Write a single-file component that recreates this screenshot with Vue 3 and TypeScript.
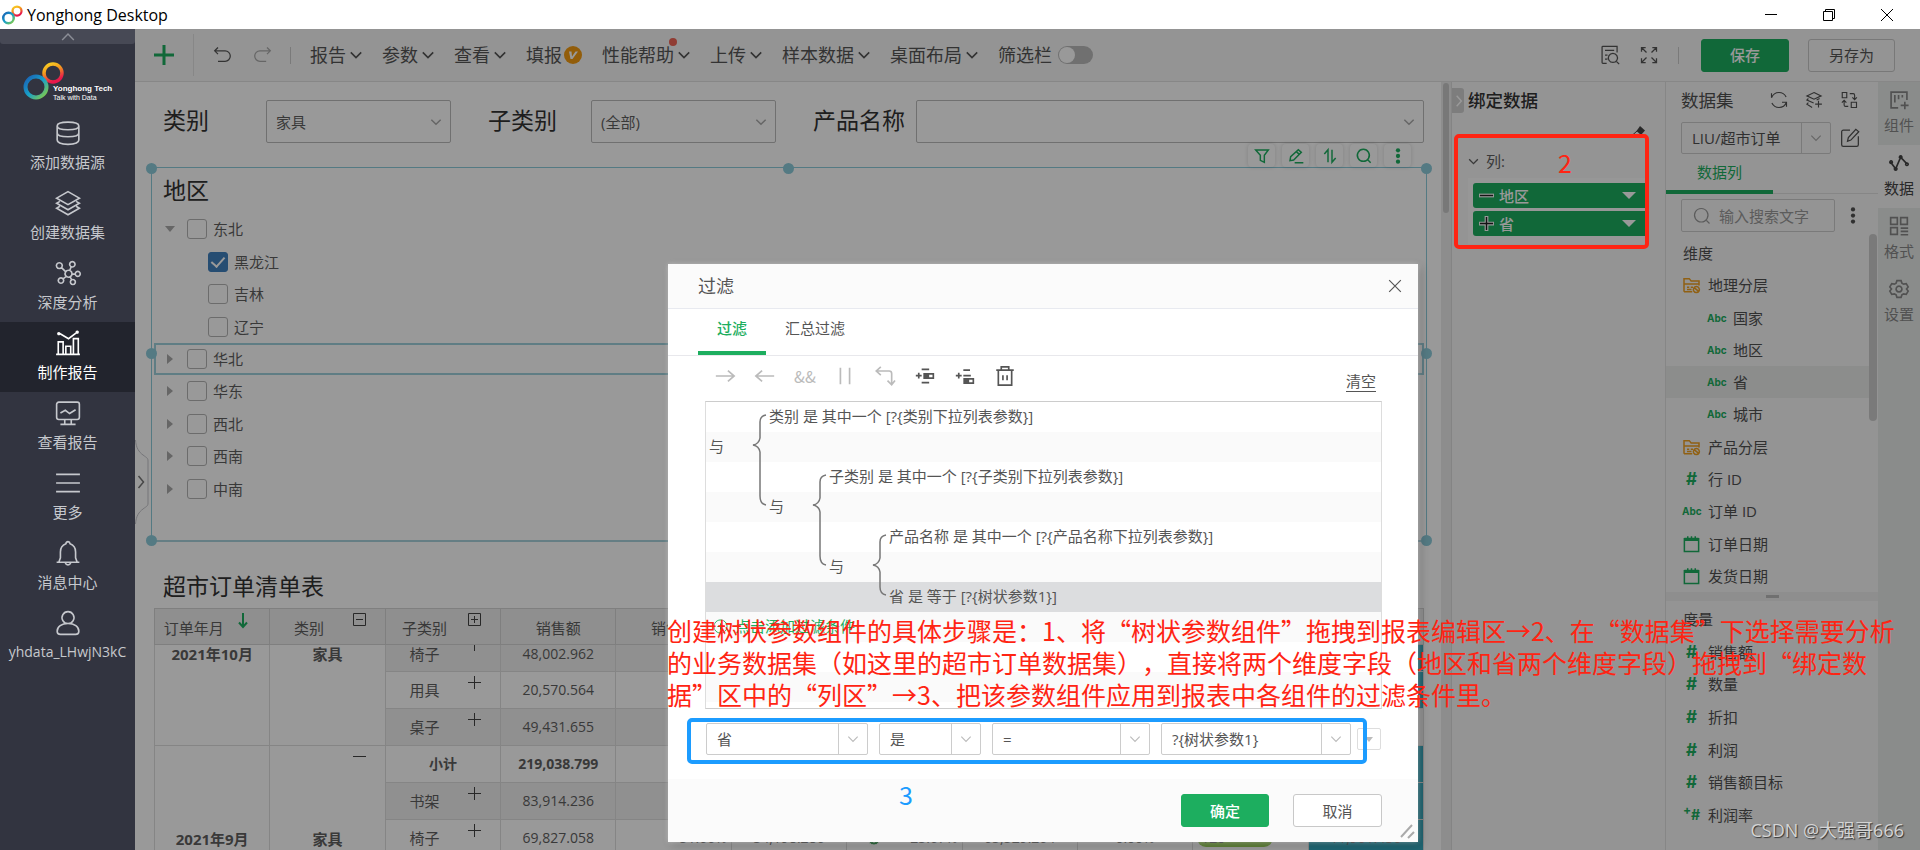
<script setup lang="ts">
import { ref } from 'vue'

interface NavItem { label: string; icon: string; active?: boolean }
interface MenuItem { label: string; arrow?: boolean; badge?: boolean; dot?: boolean }
interface TreeRow { id: string; label: string; child?: boolean; open?: boolean; checked?: boolean; hover?: boolean }
interface Field { label: string; kind: 'folder' | 'abc' | 'num' | 'date' | 'calc'; child?: boolean; active?: boolean }
interface Condition { id: string; label: string; value: string; size: string }

const icons: Record<string, string> = {
  db: 'M2 5.500C2 3 6.500 2 12 2s10 1 10 3.500S17.500 9 12 9 2 8 2 5.500zM2 5.500v13C2 21 6.500 22.500 12 22.500S22 21 22 18.500v-13M2 12c0 2.500 4.500 3.500 10 3.500S22 14.500 22 12',
  layers: 'M12 1.500l10.500 6L12 13.500 1.500 7.500zM4.500 10.500l-3 1.800L12 18.300l10.500-6-3-1.800M4.500 15l-3 1.800L12 22.800l10.500-6-3-1.800',
  graph: 'M12.500 9.500a3.200 3.200 0 1 0 .01 0M4 2.500a2.700 2.700 0 1 0 .01 0M16 1.500a2.500 2.500 0 1 0 .01 0M21 10.500a2.300 2.300 0 1 0 .01 0M5.500 16.500a2.500 2.500 0 1 0 .01 0M16.500 18a2.300 2.300 0 1 0 .01 0M6 7l4 4M15 6l-1.500 4M16 13h2.500M10.500 15l-3 2.500M14 15.500l1.500 3',
  chart: 'M1 22.500h22M3 22v-11h4.500v11M10 22v-7h4.500v7M17 22V8h4.500v14M4 3l8.500 5L20.500 2M3.500 2.500a.8 .8 0 1 0 .01 0M20.500 1.200a.8 .8 0 1 0 .01 0',
  monitor: 'M3.500 2h17a2 2 0 0 1 2 2v12a2 2 0 0 1-2 2h-17a2 2 0 0 1-2-2V4a2 2 0 0 1 2-2zM5 12l4.500-2.500 4 3L19 9M9 18v4M15 18v4M5 22.500h14',
  lines: 'M1 4h22M1 12h22M1 20h22',
  bell: 'M1.500 20.500h21M3.500 20.500l1.500-4V11c0-4 2.500-6.500 5-7.500 .3-1.500 1-2 2-2s1.700 .5 2 2c2.500 1 5 3.500 5 7.500v5.500l1.500 4M9.500 21c.5 1.500 1.300 2 2.500 2s2-.5 2.500-2',
  user: 'M12 1.500a5.500 5.500 0 1 0 .01 0M2 19.500c0-4 4-7 10-7s10 3 10 7c0 2-1 3-3 3H5c-2 0-3-1-3-3z',
  undo: 'M6 3L2 7l4 4M2 7h12.500a5.500 5.500 0 0 1 0 12.500H6',
  redo: 'M18 3l4 4-4 4M22 7H9.500a5.500 5.500 0 0 0 0 12.500H17',
  preview: 'M8 22H3.500a1 1 0 0 1-1-1V2.500a1 1 0 0 1 1-1h17V9M6 6.500h11M6 12h3M6 17h3M15.500 10a5.500 5.500 0 1 0 .01 0M19.500 19.500l3.500 3.500',
  expand: 'M3 8V3h5M3 3l6 6M16 3h5v5M21 3l-6 6M3 16v5h5M3 21l6-6M21 16v5h-5M21 21l-6-6',
  refresh: 'M2 9C4 4 7.500 2 12 2c4 0 7.500 2 9.500 6M2 3v6M22 15c-2 5-5.500 7-10 7-4 0-7.500-2-9.500-6M16 15h6v6',
  addset: 'M12 2l9.500 4.500L12 11 2.500 6.500zM4.500 10L2.500 12l9 4M4.500 15.500l-2 2 7 4.500M19.500 10l-4 2M18 13v9M13.500 17.500h9',
  swap: 'M3 2h6v7H3zM15 15h7v7h-7zM13 3.500h4.500a2 2 0 0 1 2 2V11M16.500 8.500l3 3 3-3M11 20.500H7.500a2 2 0 0 1-2-2V13M2.500 15.500l3-3 3 3',
  edit: 'M12 2.500H4A2 2 0 0 0 2 4.500V20a2 2 0 0 0 2 2h16a2 2 0 0 0 2-2V10M9 16l1-4.500 9-10 3.500 3L13 14.500z',
  search: 'M11 2a9 9 0 1 0 .01 0M18 18l4 4',
  widget: 'M11 21.500H2.500v-19h19V12M7 6v9M11.500 6v5M16 6v3M19 14v9M14 18.500h9.500',
  dataline: 'M2 11l6 8 6-14 7.500 8M2.500 9.500a1.500 1.500 0 1 0 .01 0M8 17.500a1.500 1.500 0 1 0 .01 0M14 3.500a1.500 1.500 0 1 0 .01 0M21.500 12a1.500 1.500 0 1 0 .01 0',
  format: 'M2 2h8v8H2zM14 2h8v8h-8zM2 14h8v8H2zM14 14.500h9M14 18.500h9M14 22.500h9',
  gear: 'M9.500 2h5l1 3 2 1.200 3.200-.7 2.300 4-2 2.500 2 2.500-2.300 4-3.200-.7-2 1.200-1 3h-5l-1-3-2-1.200-3.200 .7-2.300-4L3 12 1 9.500l2.300-4 3.200 .7 2-1.200zM12 8.500a3.500 3.500 0 1 0 .01 0',
  funnel: 'M2.500 3h19l-6 8v10.500l-6-3V11z',
  pencil: 'M3 19l1-6L15.500 2.500l4.500 4L8.500 18zM12.500 5.500l4.500 4M10 22h13',
  sort: 'M3.500 9l5.500-6.500v19M15 2.500v19l5.500-6.500',
  right: 'M1 12h22M15.500 5.500L23 12l-7.500 6.500',
  left: 'M23 12H1M8.500 5.500L1 12l7.500 6.500',
  bars: 'M6.500 2v20M17.500 2v20',
  turn: 'M7 1L1.500 6 7 11M1.500 6H17a3 3 0 0 1 3 3v13M15 17.500l5 5 4-5',
  trash: 'M1.500 5h21M7.500 4.500V1h9v3.500M4 5v18h16V5M9.500 11v6M14.500 11v6',
  chevDown: 'M4 8l8 8 8-8',
  chevUp: 'M2 17l10-10 10 10',
  chevRight: 'M8 3l8 9-8 9',
  close: 'M2 2l20 20M22 2L2 22',
  folder: 'M2 21V3.500h7l2.500 3H22v6M2 21h11M2 10.500h20M6 15h3M11 15h3M6 18h6M18.500 14a4 4 0 1 0 .01 0M15.500 15.500l6 5',
  calendar: 'M2.500 5h19v17h-19zM2.500 4.500h19M2.500 7h19M7 1.500V6M17 1.500V6M12 1.500V6',
}

const nav: NavItem[] = [
  { label: '添加数据源', icon: 'db' },
  { label: '创建数据集', icon: 'layers' },
  { label: '深度分析', icon: 'graph' },
  { label: '制作报告', icon: 'chart', active: true },
  { label: '查看报告', icon: 'monitor' },
  { label: '更多', icon: 'lines' },
  { label: '消息中心', icon: 'bell' },
  { label: 'yhdata_LHwjN3kC', icon: 'user' },
]

const menus: MenuItem[] = [
  { label: '报告', arrow: true },
  { label: '参数', arrow: true },
  { label: '查看', arrow: true },
  { label: '填报', badge: true },
  { label: '性能帮助', arrow: true, dot: true },
  { label: '上传', arrow: true },
  { label: '样本数据', arrow: true },
  { label: '桌面布局', arrow: true },
]

const params = [
  { id: 'p1', label: '类别', value: '家具' },
  { id: 'p2', label: '子类别', value: '(全部)' },
  { id: 'p3', label: '产品名称', value: '' },
]

const regions = ref<TreeRow[]>([
  { id: 'r1', label: '东北', open: true },
  { id: 'r2', label: '黑龙江', child: true, checked: true },
  { id: 'r3', label: '吉林', child: true },
  { id: 'r4', label: '辽宁', child: true },
  { id: 'r5', label: '华北', hover: true },
  { id: 'r6', label: '华东' },
  { id: 'r7', label: '西北' },
  { id: 'r8', label: '西南' },
  { id: 'r9', label: '中南' },
])

const handles = ['tl', 'tc', 'tr', 'ml', 'mr', 'bl', 'bc', 'br']
const tools = ['funnel', 'pencil', 'sort', 'search', 'more']

const dimensions: Field[] = [
  { label: '地理分层', kind: 'folder' },
  { label: '国家', kind: 'abc', child: true },
  { label: '地区', kind: 'abc', child: true },
  { label: '省', kind: 'abc', child: true, active: true },
  { label: '城市', kind: 'abc', child: true },
  { label: '产品分层', kind: 'folder' },
  { label: '行 ID', kind: 'num' },
  { label: '订单 ID', kind: 'abc' },
  { label: '订单日期', kind: 'date' },
  { label: '发货日期', kind: 'date' },
]

const measures: Field[] = [
  { label: '销售额', kind: 'num' },
  { label: '数量', kind: 'num' },
  { label: '折扣', kind: 'num' },
  { label: '利润', kind: 'num' },
  { label: '销售额目标', kind: 'num' },
  { label: '利润率', kind: 'calc' },
]

const rail: NavItem[] = [
  { label: '组件', icon: 'widget' },
  { label: '数据', icon: 'dataline', active: true },
  { label: '格式', icon: 'format' },
  { label: '设置', icon: 'gear' },
]

const rules = [
  { text: '类别 是 其中一个 [?{类别下拉列表参数}]', level: 1 },
  { text: '与', level: 0 },
  { text: '子类别 是 其中一个 [?{子类别下拉列表参数}]', level: 2 },
  { text: '与', level: 1 },
  { text: '产品名称 是 其中一个 [?{产品名称下拉列表参数}]', level: 3 },
  { text: '与', level: 2 },
  { text: '省 是 等于 [?{树状参数1}]', level: 3, selected: true },
]

const conditions: Condition[] = [
  { id: 'c1', label: '字段', value: '省', size: 'w-field' },
  { id: 'c2', label: '是否', value: '是', size: 'w-is' },
  { id: 'c3', label: '运算符', value: '=', size: 'w-op' },
  { id: 'c4', label: '参数', value: '?{树状参数1}', size: 'w-val' },
]
</script>

<template>
  <div class="desktop">
    <header class="titlebar">
      <svg class="mark" viewBox="0 0 42 40">
        <circle cx="30" cy="12" r="9" fill="none" stroke="url(#warm)" stroke-width="4.500" />
        <circle cx="13" cy="26" r="10.500" fill="none" stroke="url(#cool)" stroke-width="5" />
      </svg>
      <span class="app-name">Yonghong Desktop</span>
      <div class="win-buttons">
        <button type="button" aria-label="最小化"><svg viewBox="0 0 12 12"><path d="M0 5.500h12" /></svg></button>
        <button type="button" aria-label="还原"><svg viewBox="0 0 12 12"><path d="M.5 2.500h9v9h-9zM2.500 2.500v-2h9v9h-2" /></svg></button>
        <button type="button" aria-label="关闭窗口"><svg viewBox="0 0 12 12"><path d="M0 0l12 12M12 0L0 12" /></svg></button>
      </div>
    </header>

    <div class="shell">
      <nav class="sidebar">
        <button type="button" class="fold" aria-label="收起">
          <svg class="ico" viewBox="0 0 24 24"><path :d="icons.chevUp" /></svg>
        </button>
        <div class="logo">
          <svg viewBox="0 0 42 40">
            <defs>
              <linearGradient id="warm" x1="0" y1="0" x2=".4" y2="1">
                <stop offset="0" stop-color="#f9d423" /><stop offset=".45" stop-color="#f39a1e" /><stop offset="1" stop-color="#e8174b" />
              </linearGradient>
              <linearGradient id="cool" x1="0" y1="0" x2="1" y2="1">
                <stop offset="0" stop-color="#1a5fb4" /><stop offset=".5" stop-color="#18a0c8" /><stop offset="1" stop-color="#8ccf3f" />
              </linearGradient>
            </defs>
            <circle cx="30" cy="12" r="9" fill="none" stroke="url(#warm)" stroke-width="3.500" />
            <circle cx="13" cy="26" r="10.500" fill="none" stroke="url(#cool)" stroke-width="4" />
          </svg>
          <div class="logo-text"><strong>Yonghong Tech</strong><small>Talk with Data</small></div>
        </div>
        <a v-for="n in nav" :key="n.label" href="#" class="nav-item" :class="{ active: n.active }">
          <svg class="ico" viewBox="0 0 24 24"><path :d="icons[n.icon]" /></svg>
          <span>{{ n.label }}</span>
        </a>
      </nav>

      <div class="work">
        <div class="toolbar">
          <button type="button" class="add" aria-label="新建"><svg viewBox="0 0 20 20"><path d="M10 0v20M0 10h20" /></svg></button>
          <button type="button" class="tool undo" aria-label="撤销"><svg class="ico" viewBox="0 0 24 24"><path :d="icons.undo" /></svg></button>
          <button type="button" class="tool redo" aria-label="重做"><svg class="ico" viewBox="0 0 24 24"><path :d="icons.redo" /></svg></button>
          <i class="sep"></i>
          <div class="menus">
            <button v-for="m in menus" :key="m.label" type="button" class="menu">
              {{ m.label }}
              <svg v-if="m.arrow" class="ico caret" viewBox="0 0 24 24"><path :d="icons.chevDown" /></svg>
              <svg v-if="m.badge" class="vip" viewBox="0 0 18 18"><circle cx="9" cy="9" r="9" /><path d="M5 5.500h2.500l.5 5 3.500-5H14L8.500 13H6.500z" /></svg>
              <i v-if="m.dot" class="dot"></i>
            </button>
            <label class="switch">筛选栏<input type="checkbox" role="switch" /></label>
          </div>
          <button type="button" class="tool" aria-label="预览"><svg class="ico" viewBox="0 0 24 24"><path :d="icons.preview" /></svg></button>
          <button type="button" class="tool full" aria-label="全屏"><svg class="ico" viewBox="0 0 24 24"><path :d="icons.expand" /></svg></button>
          <i class="sep end"></i>
          <button type="button" class="btn primary">保存</button>
          <button type="button" class="btn saveas">另存为</button>
        </div>

        <div class="body">
          <main class="canvas">
            <div class="params">
              <template v-for="p in params" :key="p.id">
                <label :for="p.id">{{ p.label }}</label>
                <div class="param-box" :class="{ wide: p.id === 'p3' }">
                  <select :id="p.id"><option>{{ p.value }}</option></select>
                  <svg class="ico" viewBox="0 0 24 24"><path :d="icons.chevDown" /></svg>
                </div>
              </template>
            </div>

            <section class="region">
              <i v-for="h in handles" :key="h" class="handle" :class="h"></i>
              <div class="region-tools">
                <button v-for="t in tools" :key="t" type="button" :aria-label="t">
                  <svg v-if="t === 'more'" class="dots" viewBox="0 0 24 24"><circle cx="12" cy="3.500" r="3.200" /><circle cx="12" cy="12" r="3.200" /><circle cx="12" cy="20.500" r="3.200" /></svg>
                  <svg v-else class="ico" viewBox="0 0 24 24"><path :d="icons[t]" /></svg>
                </button>
              </div>
              <h2>地区</h2>
              <div class="region-tree">
                <div v-for="r in regions" :key="r.id" class="tree-row" :class="{ child: r.child, hover: r.hover }">
                  <i v-if="!r.child" class="arrow" :class="{ open: r.open }"></i>
                  <input :id="r.id" v-model="r.checked" type="checkbox" />
                  <label :for="r.id">{{ r.label }}</label>
                </div>
              </div>
            </section>

            <section class="orders">
              <h2>超市订单清单表</h2>
              <table>
                <thead>
                  <tr>
                    <th class="mark-cell">订单年月<svg class="mini down" viewBox="0 0 12 16"><path d="M6 0v14M2 9.500L6 14l4-4.500" /></svg></th>
                    <th class="mark-cell">类别<svg class="mini" viewBox="0 0 13 13"><path d="M.5 .5h12v12H.5zM3 6.500h7" /></svg></th>
                    <th class="mark-cell">子类别<svg class="mini" viewBox="0 0 13 13"><path d="M.5 .5h12v12H.5zM3 6.500h7M6.500 3v7" /></svg></th>
                    <th>销售额</th>
                    <th>销售额</th>
                    <th></th><th></th><th></th><th></th><th></th><th></th>
                  </tr>
                </thead>
                <tbody>
                  <tr class="cut shade">
                    <td rowspan="3" class="group top">2021年10月</td>
                    <td rowspan="3" class="group top">家具</td>
                    <td class="mark-cell">椅子<svg class="mini plus" viewBox="0 0 13 13"><path d="M6.500 7v6" /></svg></td>
                    <td>48,002.962</td><td></td><td></td><td></td><td></td><td></td><td></td><td class="teal"></td>
                  </tr>
                  <tr>
                    <td class="mark-cell">用具<svg class="mini plus" viewBox="0 0 13 13"><path d="M6.500 0v13M0 6.500h13" /></svg></td>
                    <td>20,570.564</td><td></td><td></td><td></td><td></td><td></td><td></td><td class="teal"></td>
                  </tr>
                  <tr class="shade">
                    <td class="mark-cell">桌子<svg class="mini plus" viewBox="0 0 13 13"><path d="M6.500 0v13M0 6.500h13" /></svg></td>
                    <td>49,431.655</td><td></td><td></td><td></td><td></td><td></td><td></td><td></td>
                  </tr>
                  <tr class="total">
                    <td rowspan="3" class="group bottom">2021年9月</td>
                    <td rowspan="3" class="group bottom">家具<svg class="mini plus" viewBox="0 0 13 13"><path d="M0 6.500h13" /></svg></td>
                    <td>小计</td><td>219,038.799</td><td class="right">100.00%</td><td></td><td></td><td></td><td></td><td></td><td class="teal"></td>
                  </tr>
                  <tr class="shade">
                    <td class="mark-cell">书架<svg class="mini plus" viewBox="0 0 13 13"><path d="M6.500 0v13M0 6.500h13" /></svg></td>
                    <td>83,914.236</td><td></td><td></td><td></td><td></td><td></td><td></td><td class="teal"></td>
                  </tr>
                  <tr>
                    <td class="mark-cell">椅子<svg class="mini plus" viewBox="0 0 13 13"><path d="M6.500 0v13M0 6.500h13" /></svg></td>
                    <td>69,827.058</td><td class="right">51.66%</td><td>54,198.286</td>
                    <td class="right"><svg class="drop" viewBox="0 0 12 12"><circle cx="6" cy="6" r="6" /><path d="M6 2v7M3 6.500l3 3 3-3" /></svg>-25.67%</td>
                    <td>65,529.264</td><td>0.00%</td><td class="pill-cell"><span>120</span></td><td class="teal">11,961.456</td>
                  </tr>
                </tbody>
              </table>
            </section>
            <svg class="side-tab" viewBox="0 0 14 84">
              <path class="edge" d="M.5 0C1 8 4 12 8 15s5 3 5 6v42c0 3-1 3-5 6S1 76 .5 84" />
              <path d="M3.500 36l5 6-5 6" />
            </svg>
          </main>
          <div class="scroll"><i></i></div>

          <aside class="binding">
            <button type="button" class="collapse" aria-label="收起面板"><svg class="ico" viewBox="0 0 24 24"><path :d="icons.chevRight" /></svg></button>
            <h3>绑定数据</h3>
            <div class="erase"><svg viewBox="0 0 14 11"><path d="M8 0l5 4.500L9 9 4.500 5z" /><path d="M5 5L0 9.500" class="line" /></svg></div>
            <div class="col-head"><svg class="ico" viewBox="0 0 24 24"><path :d="icons.chevDown" /></svg>列:</div>
            <div class="pills">
              <button type="button"><svg class="sign" viewBox="0 0 16 16"><path class="halo" d="M0 8h16" /><path d="M1 8h14" /></svg>地区<i></i></button>
              <button type="button"><svg class="sign" viewBox="0 0 16 16"><path class="halo" d="M0 8h16M8 0v16" /><path d="M1 8h14M8 1v14" /></svg>省<i></i></button>
            </div>
          </aside>

          <aside class="dataset">
            <div class="ds-head">
              <h3>数据集</h3>
              <button v-for="i in ['refresh', 'addset', 'swap']" :key="i" type="button" :aria-label="i"><svg class="ico" viewBox="0 0 24 24"><path :d="icons[i]" /></svg></button>
            </div>
            <div class="ds-pick">
              <div class="combo">
                <select aria-label="数据集"><option>LIU/超市订单</option></select>
                <span><svg class="ico" viewBox="0 0 24 24"><path :d="icons.chevDown" /></svg></span>
              </div>
              <button type="button" aria-label="编辑"><svg class="ico" viewBox="0 0 24 24"><path :d="icons.edit" /></svg></button>
            </div>
            <div class="ds-tabs"><button type="button">数据列</button></div>
            <div class="ds-search">
              <div class="search-box">
                <svg class="ico" viewBox="0 0 24 24"><path :d="icons.search" /></svg>
                <input type="text" placeholder="输入搜索文字" aria-label="搜索" />
              </div>
              <button type="button" aria-label="更多"><svg class="dots" viewBox="0 0 24 24"><circle cx="12" cy="3.500" r="3" /><circle cx="12" cy="12" r="3" /><circle cx="12" cy="20.500" r="3" /></svg></button>
            </div>
            <div class="fields dims">
              <div class="caption">维度</div>
              <div v-for="f in dimensions" :key="f.label" class="field-row" :class="{ child: f.child, active: f.active }">
                <svg v-if="f.kind === 'folder'" class="ico folder" viewBox="0 0 24 24"><path :d="icons.folder" /></svg>
                <svg v-else-if="f.kind === 'date'" class="ico date" viewBox="0 0 24 24"><path :d="icons.calendar" /></svg>
                <b v-else-if="f.kind === 'abc'" class="abc">Abc</b>
                <b v-else class="num">#</b>
                <span>{{ f.label }}</span>
              </div>
              <i class="thumb"></i>
            </div>
            <div class="splitter"><i></i></div>
            <div class="fields meas">
              <div class="caption">度量</div>
              <div v-for="f in measures" :key="f.label" class="field-row">
                <b class="num" :class="{ calc: f.kind === 'calc' }"><sup v-if="f.kind === 'calc'">+</sup>#</b>
                <span>{{ f.label }}</span>
              </div>
            </div>
          </aside>

          <nav class="rail">
            <button v-for="r in rail" :key="r.label" type="button" :class="{ active: r.active }">
              <svg class="ico" viewBox="0 0 24 24"><path :d="icons[r.icon]" /></svg>{{ r.label }}
            </button>
          </nav>
        </div>

        <div class="mask"></div>

        <div class="dialog" role="dialog" aria-label="过滤">
          <div class="dlg-head">
            <h3>过滤</h3>
            <button type="button" aria-label="关闭"><svg class="ico" viewBox="0 0 24 24"><path :d="icons.close" /></svg></button>
          </div>
          <div class="dlg-tabs">
            <button type="button" class="active">过滤</button>
            <button type="button">汇总过滤</button>
          </div>
          <div class="dlg-tools">
            <button type="button" aria-label="右移"><svg class="ico" viewBox="0 0 24 24"><path :d="icons.right" /></svg></button>
            <button type="button" aria-label="左移"><svg class="ico" viewBox="0 0 24 24"><path :d="icons.left" /></svg></button>
            <button type="button" class="and">&amp;&amp;</button>
            <button type="button" aria-label="或"><svg class="ico" viewBox="0 0 24 24"><path :d="icons.bars" /></svg></button>
            <button type="button" aria-label="非"><svg class="ico" viewBox="0 0 24 24"><path :d="icons.turn" /></svg></button>
            <button type="button" class="on" aria-label="前插条件"><svg class="ico" viewBox="0 0 24 24"><path d="M1 11.500h7M4.500 8v7M8 4h9M8 20h9" /><path class="fill" d="M11 9.500h11v5H11z" /><path class="hole" d="M17 10.500h4v3h-4z" /></svg></button>
            <button type="button" class="on" aria-label="后插条件"><svg class="ico" viewBox="0 0 24 24"><path d="M1 11.500h7M4.500 8v7M10 5h8M10 11.500h9" /><path class="fill" d="M11 15.500h11v5H11z" /><path class="hole" d="M17 16.500h4v3h-4z" /></svg></button>
            <button type="button" class="on" aria-label="删除"><svg class="ico" viewBox="0 0 24 24"><path :d="icons.trash" /></svg></button>
            <a href="#" class="clear">清空</a>
          </div>
          <div class="rules">
            <div v-for="(r, i) in rules" :key="i" class="rule" :class="['lv' + r.level, { selected: r.selected }]">{{ r.text }}</div>
            <div class="rule hint">
              <svg class="ico" viewBox="0 0 24 24"><path d="M12 1.500a10.500 10.500 0 1 0 .01 0M12 7v10M7 12h10" /></svg>点击添加过滤条件
            </div>
            <div class="rule"></div>
            <div class="rule"></div>
            <svg class="braces" viewBox="0 0 136 184">
              <path d="M14 1Q8 2 8 8V24Q7 30 1 31Q7 32 8 38V82Q8 90 14 91" />
              <path d="M74 61Q68 62 68 68V84Q67 90 61 91Q67 92 68 98V142Q68 150 74 151" />
              <path d="M134 121Q128 122 128 128V144Q127 150 121 151Q127 152 128 158V173Q128 180 134 181" />
            </svg>
          </div>
          <div class="conds">
            <div v-for="c in conditions" :key="c.id" class="combo" :class="c.size">
              <select :id="c.id" :aria-label="c.label"><option>{{ c.value }}</option></select>
              <span><svg class="ico" viewBox="0 0 24 24"><path :d="icons.chevDown" /></svg></span>
            </div>
            <button type="button" class="drop-btn" aria-label="更多条件"><i></i></button>
          </div>
          <div class="dlg-foot">
            <button type="button" class="btn primary">确定</button>
            <button type="button" class="btn">取消</button>
            <svg class="grip" viewBox="0 0 15 15"><path d="M1 13L12 1M8 14l6-6" /></svg>
          </div>
        </div>
      </div>
    </div>

    <div class="box red"></div>
    <span class="step red-text">2</span>
    <div class="box blue"></div>
    <span class="step blue-text">3</span>
    <p class="note">创建树状参数组件的具体步骤是：1、将“树状参数组件”拖拽到报表编辑区→2、在“数据集”下选择需要分析<br />的业务数据集（如这里的超市订单数据集），直接将两个维度字段（地区和省两个维度字段）拖拽到“绑定数<br />据”区中的“列区”→3、把该参数组件应用到报表中各组件的过滤条件里。</p>
    <span class="watermark">CSDN @大强哥666</span>
  </div>
</template>

<style>
body { margin: 0; }
</style>

<style scoped>
.desktop, .desktop * { box-sizing: border-box; }
.desktop {
  position: relative; display: flex; flex-direction: column; height: 100vh; overflow: hidden;
  background: #fff; color: #606060; font: 15px/20px "Open Sans", "Noto Sans CJK SC", sans-serif;
}
button, input, select { margin: 0; padding: 0; border: 0; background: none; color: inherit; font: inherit; }
select { appearance: none; outline: none; min-width: 0; }
a { color: inherit; text-decoration: none; }
h2, h3, p { margin: 0; font-weight: 400; }
svg { display: block; flex: none; overflow: visible; }
.ico { width: 20px; height: 20px; fill: none; stroke: currentColor; stroke-width: 1.500; }

.titlebar { display: flex; align-items: center; height: 29px; flex: none; padding-left: 2px; background: #fff; color: #000; }
.mark { width: 21px; height: 20px; }
.app-name { flex: 1; margin-left: 4px; font-size: 16px; }
.win-buttons { display: flex; padding-right: 4px; }
.win-buttons button { display: grid; place-items: center; width: 58px; height: 28px; }
.win-buttons svg { width: 12px; height: 12px; fill: none; stroke: #000; stroke-width: 1; }

.shell { display: flex; flex: 1; min-height: 0; }
.sidebar { width: 135px; flex: none; background: #323440; color: #c6c8cd; }
.fold { display: grid; place-items: center; width: 100%; height: 15px; background: #474955; color: #8b8d96; border-radius: 0 0 3px 3px; }
.fold .ico { width: 16px; height: 14px; stroke-width: 2.500; }
.logo { display: flex; height: 68px; padding: 17px 0 0 23px; }
.logo > svg { width: 42px; height: 40px; }
.logo-text { display: flex; flex-direction: column; margin: 22px 0 0 -12px; color: #fff; font-family: "Liberation Sans", sans-serif; white-space: nowrap; z-index: 1; }
.logo-text strong { font-size: 8px; line-height: 11px; }
.logo-text small { font-size: 7px; line-height: 8px; }
.nav-item { display: flex; flex-direction: column; align-items: center; height: 70px; padding-top: 8px; white-space: nowrap; }
.nav-item .ico { width: 26px; height: 26px; }
.nav-item span { margin-top: 6px; }
.nav-item:last-child { font-size: 14px; }
.nav-item.active { background: #22242d; color: #fff; }

.work { position: relative; display: flex; flex-direction: column; flex: 1; min-width: 0; }
.mask { position: absolute; inset: 0; background: rgba(0, 0, 0, .4); }
.toolbar { display: flex; align-items: center; flex: none; height: 53px; padding-right: 25px; background: #f7f7f7; border-bottom: 1px solid #e2e2e2; color: #555; }
.add { display: grid; place-items: center; width: 59px; height: 42px; border-right: 1px solid #e2e2e2; }
.add svg { width: 20px; height: 20px; stroke: #1dae5f; stroke-width: 3; }
.tool { display: grid; place-items: center; width: 22px; height: 30px; }
.tool.undo { margin-left: 18px; }
.tool.redo { margin-left: 17px; color: #aaa; }
.tool.full { margin: 0 18px 0 17px; }
.sep { width: 1px; height: 17px; margin: 0 19px 0 17px; background: #ccc; }
.sep.end { margin: 0 22px 0 0; }
.menus { display: flex; flex: 1; gap: 20px; font-size: 18px; }
.menu { position: relative; display: flex; align-items: center; gap: 4px; height: 30px; white-space: nowrap; }
.caret { width: 12px; height: 14px; stroke-width: 2.500; }
.caret path { transform: scale(1.3); transform-origin: center; }
.vip { width: 18px; height: 18px; margin-left: -2px; fill: #f39c12; }
.vip path { fill: #fff; }
.dot { position: absolute; top: -2px; right: 13px; width: 8px; height: 8px; border-radius: 50%; background: #f06455; }
.switch { display: flex; align-items: center; gap: 6px; white-space: nowrap; }
.switch input { appearance: none; display: flex; align-items: center; width: 35px; height: 18px; border-radius: 9px; padding: 1px; background: #bbb; }
.switch input::before { content: ""; width: 16px; height: 16px; border-radius: 50%; background: #fff; }
.btn { width: 89px; height: 33px; border: 1px solid #c8c8c8; border-radius: 3px; background: #fff; color: #555; }
.btn.primary { width: 88px; border-color: #1dae5f; background: #1dae5f; color: #fff; font-weight: 500; }
.saveas { width: 87px; margin-left: 19px; background: #f7f7f7; }

.body { display: flex; flex: 1; min-height: 0; }
.canvas { position: relative; flex: 1; min-width: 0; overflow: hidden; }
.canvas h2 { color: #333; font-size: 23px; }
.params { display: flex; align-items: center; padding: 18px 17px 0 28px; }
.params label { width: 103px; flex: none; color: #333; font-size: 23px; line-height: 30px; padding-bottom: 3px; white-space: nowrap; }
.param-box { display: grid; align-items: center; width: 185px; height: 43px; margin-right: 37px; border: 1px solid #bbb; border-radius: 2px; }
.param-box > * { grid-area: 1 / 1; }
.param-box select { width: 100%; height: 100%; padding-left: 9px; }
.param-box .ico { justify-self: end; width: 14px; height: 14px; margin-right: 7px; color: #aaa; stroke-width: 2.500; pointer-events: none; }
.param-box.wide { flex: 1; margin-right: 0; }

.region { position: relative; height: 375px; margin: 24px 14px 0 16px; border: 1px solid #8ccbdb; border-bottom: 2px solid #a9d3dd; }
.region h2 { height: 45px; padding: 2px 0 0 11px; line-height: 41px; }
.handle { position: absolute; width: 11px; height: 11px; border-radius: 50%; background: #8ccbdb; }
.tl, .tc, .tr { top: -5px; }
.ml, .mr { top: 180px; }
.bl, .bc, .br { bottom: -6px; }
.tl, .ml, .bl { left: -6px; }
.tr, .mr, .br { right: -6px; }
.tc, .bc { left: calc(50% - 6px); }
.region-tools { position: absolute; right: 15px; top: -24px; display: flex; gap: 7px; color: #1dae5f; }
.region-tools button { display: grid; place-items: center; width: 27px; height: 23px; border-radius: 4px; background: #fff; box-shadow: 0 0 4px rgba(0, 0, 0, .15); }
.region-tools svg { width: 16px; height: 16px; stroke-width: 2.200; }
.dots { fill: currentColor; }
.region-tree { display: flex; flex-direction: column; height: 292px; margin: 0 2px; }
.tree-row { display: flex; align-items: center; flex: 1; padding-left: 9px; border: 2px solid transparent; }
.tree-row.child { padding-left: 52px; }
.tree-row.hover { border-color: #9fd0dc; }
.arrow { width: 22px; }
.arrow::before { content: ""; display: block; width: 0; border: 5px solid transparent; border-left: 6px solid #aaa; border-right: 0; margin-left: 2px; }
.arrow.open::before { border: 5px solid transparent; border-top: 6px solid #aaa; border-bottom: 0; margin-left: 0; }
.tree-row input { appearance: none; display: grid; place-items: center; width: 20px; height: 20px; margin-right: 6px; border: 1px solid #b4b4b4; border-radius: 3px; }
.tree-row input:checked { background: #4080bf; border-color: #4080bf; }
.tree-row input:checked::before { content: ""; width: 6px; height: 11px; margin-top: -3px; border: solid #fff; border-width: 0 2px 2px 0; transform: rotate(42deg); }

.orders h2 { padding: 25px 0 3px 28px; line-height: 38px; }
.orders table { table-layout: fixed; width: calc(100% - 36px); margin-left: 19px; border-collapse: collapse; text-align: center; }
.orders th { position: relative; height: 36px; padding: 2px 0 0; border: 1px solid #d4d4d4; background: #eee; font-weight: 400; white-space: nowrap; }
.orders td { position: relative; height: 37px; padding: 0; border: 1px solid #dedede; font-size: 14px; line-height: 18px; }
.orders .cut td { height: 27px; vertical-align: top; }
.orders .shade td:not(.group) { background: #f1f1f1; }
.orders .group { font-size: 15px; font-weight: 700; }
.orders .bottom { vertical-align: bottom; padding-bottom: 8px; }
.orders .mark-cell { padding-right: 37px; font-size: 15px; }
.orders .total td { font-weight: 700; }
.orders .right { padding-right: 4px; text-align: right; }
.orders .teal, .orders .shade td.teal { background: #35a9bf; }
.mini { position: absolute; top: 4px; right: 19px; width: 13px; height: 13px; fill: none; stroke: #444; stroke-width: 1; }
.mini.down { right: 20px; width: 12px; height: 16px; stroke: #1dae5f; stroke-width: 2; }
.cut .mini { top: -7px; }
.drop { display: inline-block; width: 12px; height: 12px; margin-right: 26px; fill: #1f8b3b; stroke: #fff; vertical-align: middle; }
.pill-cell span { display: block; width: 76px; margin-left: 4px; padding-left: 4px; border-radius: 9px; background: #9bd35a; text-align: left; }
.side-tab { position: absolute; left: 0; top: 358px; width: 14px; height: 84px; fill: none; stroke: #777; stroke-width: 1.500; }
.side-tab .edge { stroke: #c4c4ca; stroke-width: 1; }

.scroll { width: 11px; flex: none; padding: 1px 2px 0; background: #ececec; border-right: 1px solid #ddd; }
.scroll i { display: block; height: 130px; border-radius: 4px; background: #c9c9c9; }

.binding { width: 214px; flex: none; background: #f7f7f7; border-right: 1px solid #e0e0e0; overflow: hidden; }
.binding h3 { margin: -23px 0 0 16px; color: #333; font-weight: 500; }
.collapse { display: grid; place-items: center; width: 12px; height: 25px; margin-top: 6px; border-radius: 0 3px 3px 0; background: #d0d0d0; color: #fff; }
.collapse .ico { width: 14px; height: 16px; stroke-width: 2.500; }
.erase { display: flex; justify-content: flex-end; margin: 16px 19px 0 0; }
.erase svg { width: 14px; height: 11px; fill: #444; }
.erase .line { stroke: #444; }
.col-head { display: flex; align-items: center; gap: 6px; margin: 13px 0 6px 15px; height: 22px; }
.col-head .ico { width: 13px; height: 13px; stroke-width: 2.500; }
.pills { display: flex; flex-direction: column; gap: 3px; margin: 0 20px 0 16px; padding: 5px 0 8px 5px; background: #fcfcfc; }
.pills button { display: flex; align-items: center; height: 25px; padding: 0 9px 0 6px; border-radius: 3px 0 0 3px; background: #1dae5f; color: #fff; font-weight: 500; }
.pills i { margin-left: auto; border: 7px solid transparent; border-top-color: #fff; border-bottom: 0; }
.sign { width: 15px; height: 15px; margin-right: 5px; stroke: #222; stroke-width: 1.500; }
.sign .halo { stroke: #fff; stroke-width: 4; }

.dataset { display: flex; flex-direction: column; width: 212px; flex: none; background: #f7f7f7; color: #505050; }
.ds-head { display: flex; align-items: center; gap: 17px; height: 36px; padding: 0 20px 0 15px; }
.ds-head h3 { margin-right: auto; }
.ds-head .ico { width: 18px; height: 18px; }
.ds-pick { display: flex; gap: 9px; align-items: center; margin-top: 4px; padding: 0 18px 0 15px; }
.ds-pick > button .ico { width: 20px; height: 20px; }
.combo { display: flex; height: 32px; border: 1px solid #ccc; border-radius: 2px; }
.ds-pick .combo { flex: 1; min-width: 0; }
.combo select { flex: 1; padding-left: 10px; }
.combo span { display: grid; place-items: center; width: 29px; border-left: 1px solid #ccc; color: #aaa; }
.combo .ico { width: 14px; height: 14px; stroke-width: 2; }
.ds-tabs { height: 40px; border-bottom: 1px solid #e0e0e0; }
.ds-tabs button { width: 107px; height: 40px; border-bottom: 4px solid #1dae5f; color: #1dae5f; }
.ds-search { display: flex; align-items: center; gap: 9px; padding: 5px 15px 0; }
.search-box { display: flex; align-items: center; gap: 8px; width: 154px; height: 33px; padding-left: 11px; border: 1px solid #ccc; border-radius: 2px; }
.search-box .ico { width: 18px; height: 18px; color: #999; }
.search-box input { flex: 1; min-width: 0; }
.search-box input::placeholder { color: #999; opacity: 1; }
.ds-search .dots { width: 18px; height: 17px; }
.fields { position: relative; display: flex; flex-direction: column; flex: none; overflow: hidden; }
.dims { height: 360px; padding-top: 5px; }
.meas { height: 230px; padding-top: 2px; }
.caption, .field-row { display: flex; align-items: center; flex: 1; }
.caption { padding-left: 17px; }
.field-row { margin-right: 9px; padding-left: 16px; }
.field-row.child { padding-left: 41px; }
.field-row.active { background: #e9ecea; }
.field-row span { margin-left: 7px; }
.field-row > :first-child { width: 19px; margin-left: 0; }
.folder { color: #f0a020; stroke-width: 2; }
.folder, .date { height: 18px; }
.date { color: #1dae5f; stroke-width: 2; }
.abc, .num { color: #1dae5f; font: 700 10px/16px Inter, "Open Sans", sans-serif; text-align: center; }
.num { font-size: 17px; }
.num.calc { font-size: 14px; white-space: nowrap; }
.num sup { font-size: 12px; line-height: 0; }
.thumb { position: absolute; right: 1px; top: 2px; width: 8px; height: 187px; border-radius: 4px; background: #ccc; }
.splitter { display: grid; place-items: center; height: 9px; flex: none; background: #ededed; }
.splitter i { width: 13px; height: 3px; background: #bbb; }
.rail { width: 42px; flex: none; background: #e6eae8; color: #888; }
.rail button { display: flex; flex-direction: column; align-items: center; gap: 5px; width: 100%; height: 63px; padding-top: 8px; }
.rail .active { background: #f7f7f7; color: #444; }
.rail .ico { stroke-width: 2; }

.dialog {
  position: absolute; left: 533px; top: 235px; width: 750px; border-radius: 2px; background: #fff; color: #555;
  box-shadow: 0 0 5px rgba(255, 255, 255, .4), 3px 3px 10px rgba(0, 0, 0, .2);
}
.dlg-head { display: flex; align-items: center; justify-content: space-between; height: 45px; padding: 0 16px 0 30px; background: #fbfbfb; border-bottom: 1px solid #e8eaf0; }
.dlg-head h3 { font-size: 18px; }
.dlg-head .ico { width: 14px; height: 14px; stroke-width: 2; }
.dlg-tabs { display: flex; height: 47px; padding-left: 30px; border-bottom: 1px solid #e8e8ec; }
.dlg-tabs button { height: 46px; padding: 0 19px 4px; border-bottom: 4px solid transparent; }
.dlg-tabs .active { border-color: #1dae5f; color: #1dae5f; font-weight: 500; }
.dlg-tools { display: flex; align-items: center; height: 45px; padding: 0 42px 5px 37px; color: #bbb; }
.dlg-tools button { display: grid; place-items: center; width: 40px; height: 30px; font-size: 18px; }
.dlg-tools .ico { stroke-width: 2; }
.dlg-tools .and { font-size: 16px; font-family: "Noto Sans CJK SC", sans-serif; }
.dlg-tools .on { color: #555; }
.dlg-tools .fill { fill: currentColor; }
.dlg-tools .hole { fill: #fff; stroke: none; }
.clear { margin: 12px 0 0 auto; border-bottom: 1px solid #555; color: #555; line-height: 19px; }
.rules { position: relative; height: 308px; margin: 0 36px 0 37px; border: 1px solid #ccc; border-left-color: #ddd; border-right-color: #ddd; overflow: hidden; }
.rule { display: flex; align-items: center; height: 30px; padding: 0 0 2px 3px; white-space: nowrap; }
.rule:nth-child(even) { background: #fafafa; }
.rule.selected { background: #dcdddf; }
.lv1 { padding-left: 63px; }
.lv2 { padding-left: 123px; }
.lv3 { padding-left: 183px; }
.hint { gap: 7px; padding-left: 7px; color: #1dae5f; }
.hint .ico { width: 15px; height: 15px; }
.braces { position: absolute; left: 46px; top: 12px; width: 136px; height: 184px; fill: none; stroke: #777; stroke-width: 1.500; }
.conds { display: flex; align-items: center; padding: 14px 0 0 38px; }
.conds .combo { margin-right: 11px; }
.conds .combo span { color: #bbb; }
.w-field { width: 162px; }
.w-is { width: 102px; }
.w-op { width: 158px; }
.conds .w-val { width: 190px; margin-right: 6px; }
.drop-btn { display: grid; place-items: center; width: 24px; height: 22px; border: 1px solid #ddd; border-radius: 2px; }
.drop-btn i { border: 4px solid transparent; border-top: 5px solid #bbb; border-bottom: 0; }
.dlg-foot { position: relative; display: flex; justify-content: flex-end; gap: 24px; height: 63px; margin-top: 24px; padding: 15px 36px 0 0; background: #fbfbfb; }
.grip { position: absolute; right: 3px; bottom: 3px; width: 15px; height: 15px; fill: none; stroke: #aaa; stroke-width: 2; }

.box { position: absolute; border: 4px solid; border-radius: 5px; pointer-events: none; }
.box.red { left: 1454px; top: 134px; width: 195px; height: 115px; border-color: #ff2413; }
.box.blue { left: 687px; top: 718px; width: 680px; height: 46px; border-color: #1c9cff; }
.step { position: absolute; font: 25px/32px "Noto Sans CJK SC", sans-serif; }
.red-text { left: 1558px; top: 146px; color: #ff2413; }
.blue-text { left: 899px; top: 778px; color: #1c9cff; }
.note { position: absolute; left: 667px; top: 614px; color: #ff2413; font: 25px/32px "Noto Sans CJK SC", sans-serif; white-space: nowrap; text-spacing-trim: space-all; pointer-events: none; }
.watermark { position: absolute; right: 16px; bottom: 7px; color: #d4d4d4; font-size: 18px; line-height: 26px; text-shadow: 1px 1px 1px #333; white-space: nowrap; }
</style>
